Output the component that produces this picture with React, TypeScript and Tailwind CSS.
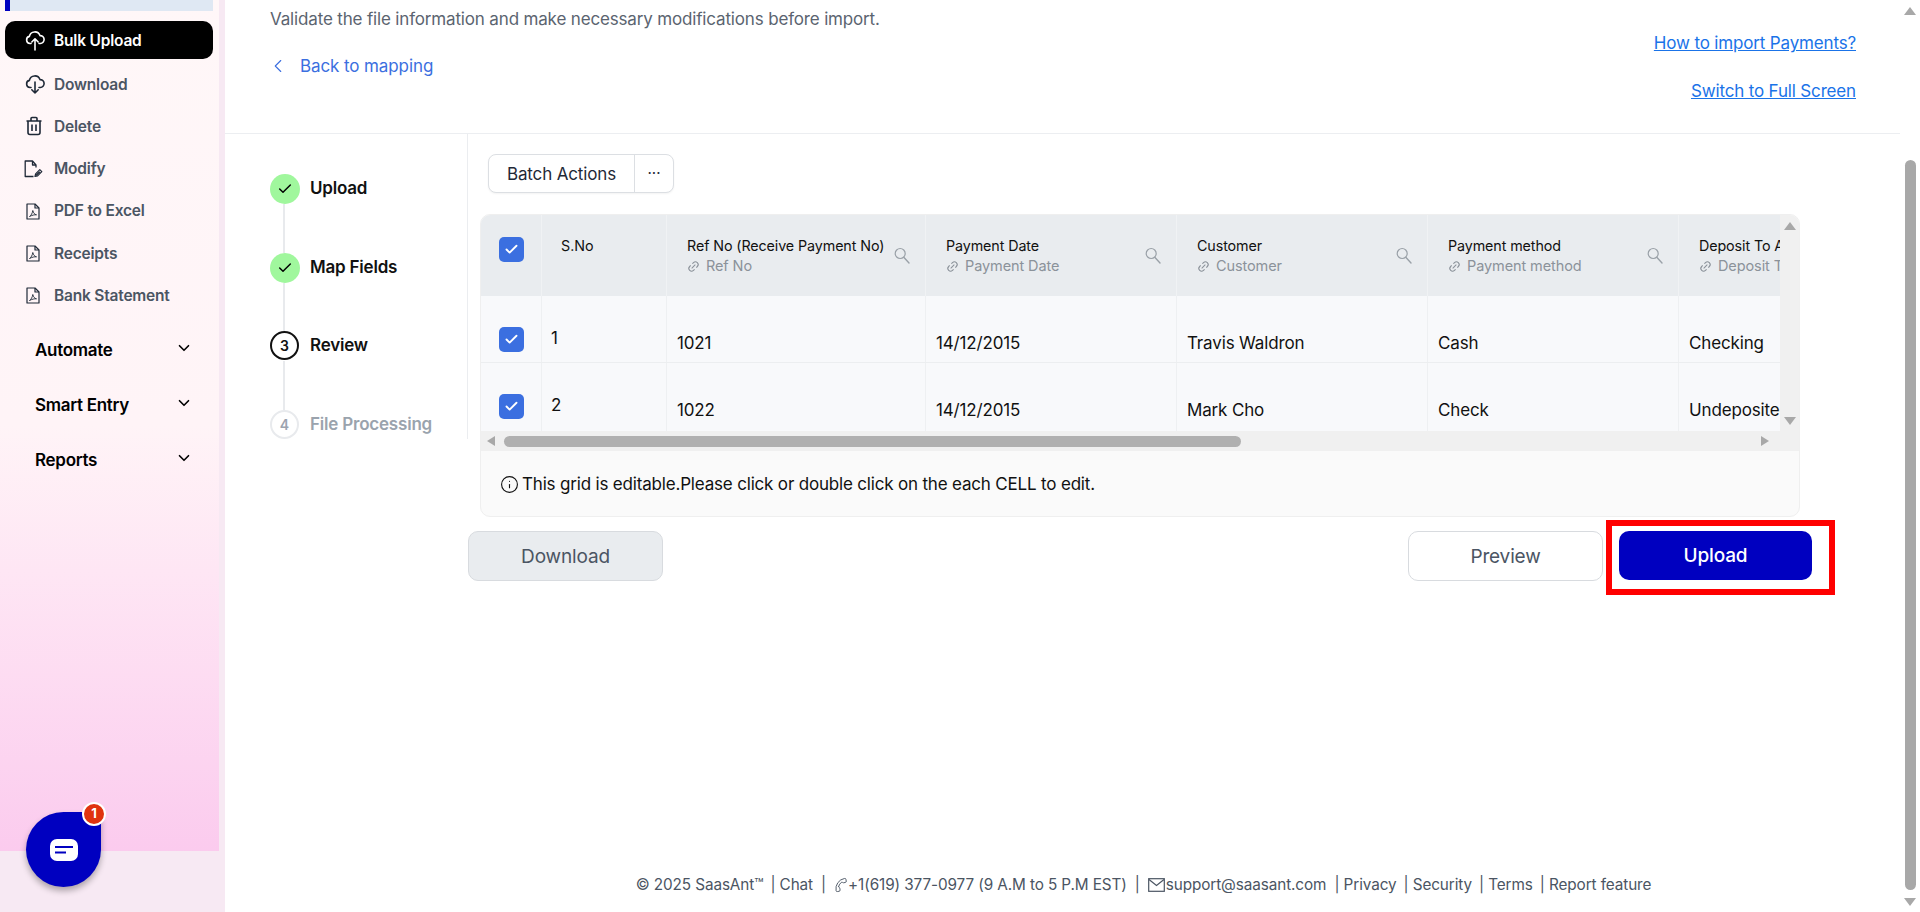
import { ChevronDown, ChevronLeft, Check, Link2, Info, Phone } from "lucide-react";

const font = "font-['Inter','Liberation_Sans',sans-serif]";

function CloudIcon({ up }: { up?: boolean }) {
  return (
    <svg width="20" height="22" viewBox="0 0 20 22" fill="none" stroke="currentColor" strokeWidth="1.600" strokeLinecap="round" strokeLinejoin="round">
      <path d="M6 14.500H5a3.600 3.600 0 0 1-.6-7.100A5.500 5.500 0 0 1 15 6.600a3.900 3.900 0 0 1 .3 7.900H14" />
      {up ? <path d="M10 21V10m-3.200 3L10 9.800l3.200 3.200" /> : <path d="M10 9v11m-3.200-3.200L10 20l3.200-3.200" />}
    </svg>
  );
}

function TrashIcon() {
  return (
    <svg width="18" height="20" viewBox="0 0 18 20" fill="none" stroke="currentColor" strokeWidth="1.600" strokeLinejoin="round">
      <path d="M1.500 5h15M6 5V2.500A1 1 0 0 1 7 1.500h4a1 1 0 0 1 1 1V5M3 5v11.500A2 2 0 0 0 5 18.500h8a2 2 0 0 0 2-2V5M7 8.500v6.500M11 8.500v6.500" />
    </svg>
  );
}

function ModifyIcon() {
  return (
    <svg width="19" height="18" viewBox="0 0 19 18" fill="none" stroke="currentColor" strokeWidth="1.300" strokeLinejoin="round">
      <path d="M9.500 16.500H1.200V1h7.300l3.500 4v2.500" />
      <path d="M8.500 1v4H12" />
      <path d="M11 16.500l.6-2.600 4.200-4.200 2 2-4.200 4.200z" strokeWidth="1.200" />
      <path d="M12 15.500l3.800-3.800" strokeWidth="1.600" />
    </svg>
  );
}

function PdfIcon() {
  return (
    <svg width="14" height="17" viewBox="0 0 14 17" fill="none" stroke="currentColor" strokeWidth="1.200" strokeLinejoin="round">
      <path d="M1 1h8l4 4v11H1z" />
      <path d="M9 1v4h4" />
      <path d="M3.500 13.500c1.500-.8 3-3.500 3.300-6 .5 2.500 2 4 3.700 4.300-2-.2-4.500.4-7 1.700z" strokeWidth="0.900" />
    </svg>
  );
}

function MailIcon() {
  return (
    <svg width="17" height="14" viewBox="0 0 17 14" fill="none" stroke="currentColor" strokeWidth="1.200">
      <rect x="0.700" y="0.700" width="15.600" height="12.600" />
      <path d="M1 1.500l7.500 6 7.500-6" />
    </svg>
  );
}

function SearchIcon() {
  return (
    <svg width="16" height="17" viewBox="0 0 16 17" fill="none" stroke="#9aa1a8" strokeWidth="1.200" strokeLinecap="round">
      <circle cx="6.200" cy="6.500" r="5" />
      <path d="M10 10.500l5 5.500" strokeWidth="1.400" />
    </svg>
  );
}

const menu = [
  { label: "Download", icon: <CloudIcon /> },
  { label: "Delete", icon: <TrashIcon /> },
  { label: "Modify", icon: <ModifyIcon /> },
  { label: "PDF to Excel", icon: <PdfIcon /> },
  { label: "Receipts", icon: <PdfIcon /> },
  { label: "Bank Statement", icon: <PdfIcon /> },
];

function Sidebar() {
  return (
    <aside className="relative w-[225px] shrink-0 h-full bg-[#f7e9f3] overflow-hidden">
      <div className="w-[219px] h-[851px] bg-gradient-to-b from-[#fff7f8] via-[#fff4f7] via-50% to-[#fbcbee] pr-[6px]">
        <div className="ml-[5px] w-[208px] h-[11px] bg-[#dfe8f3] border-l-[5px] border-[#0000c0]" />
        <div className="ml-[5px] mt-[10px] w-[208px] h-[38px] bg-black rounded-[10px] flex items-center text-white pl-[20px]">
          <CloudIcon up />
          <span className="ml-[9px] mt-[1px] text-[15.500px] font-semibold tracking-[-0.2px]">Bulk Upload</span>
        </div>
        <div className="mt-[4px]">
          {menu.map((m) => (
            <div key={m.label} className="h-[42.300px] flex items-center pl-[25px] text-[#1f2937]">
              <div className={"w-[29px] shrink-0 flex items-center " + (m.label === "Modify" ? "-ml-[1px] mr-[1px]" : m.label === "Download" || m.label === "Delete" ? "" : "pl-[1px]")}>
                {m.icon}
              </div>
              <span className="text-[15.500px] font-semibold text-[#4b5563] tracking-[-0.2px]">{m.label}</span>
            </div>
          ))}
        </div>
        <div className="mt-[6px] pl-[35px] pr-[20px]">
          {["Automate", "Smart Entry", "Reports"].map((t) => (
            <div key={t} className="h-[55px] flex items-center justify-between text-black">
              <span className="text-[17px] font-semibold tracking-[-0.3px]">{t}</span>
              <ChevronDown size={18} strokeWidth={2.200} className="-mt-[4px]" />
            </div>
          ))}
        </div>
      </div>
      {/* chat launcher */}
      <div className="absolute left-[26px] top-[812px] w-[75px] h-[75px] bg-[#0000c0] rounded-[50%_6px_50%_50%] shadow-[0_4px_6px_rgba(0,0,0,0.3)] flex items-center justify-center">
        <svg width="28" height="22" viewBox="0 0 28 22">
          <rect width="28" height="22" rx="7" fill="#fff" />
          <path d="M5 8h18M5 13.500h11" stroke="#0000c0" strokeWidth="2" />
        </svg>
      </div>
      <div className="absolute left-[82px] top-[802px] w-[24px] h-[24px] rounded-full bg-[#e0330f] border-2 border-white text-white text-[13px] font-bold flex items-center justify-center">
        1
      </div>
    </aside>
  );
}

const steps = [
  { label: "Upload", state: "done" },
  { label: "Map Fields", state: "done" },
  { label: "Review", state: "current", n: 3 },
  { label: "File Processing", state: "todo", n: 4 },
];

function Stepper() {
  return (
    <div className="w-[243px] shrink-0 h-[305px] border-r border-[#ebedf0] pl-[45px] pt-[40px]">
      {steps.map((s, i) => (
        <div key={s.label} className={"relative flex items-start " + (i < 3 ? "h-[78.700px]" : "")}>
          {i < 3 && <div className="absolute left-[13px] top-[30px] bottom-0 w-[2px] bg-[#e8eaed]" />}
          {s.state === "done" && (
            <div className="w-[30px] h-[30px] rounded-full bg-[#a0f79d] flex items-center justify-center text-black">
              <Check size={16} strokeWidth={2.200} />
            </div>
          )}
          {s.state === "current" && (
            <div className="w-[29px] h-[29px] rounded-full border-2 border-[#111] bg-white flex items-center justify-center text-[14px] font-semibold text-[#111]">
              {s.n}
            </div>
          )}
          {s.state === "todo" && (
            <div className="w-[29px] h-[29px] rounded-full border-2 border-[#e8eaed] bg-white flex items-center justify-center text-[14px] font-semibold text-[#9ca3af]">
              {s.n}
            </div>
          )}
          <span className={"leading-[28px] text-[17px] font-semibold tracking-[-0.2px] " + (s.state === "done" ? "ml-[10px] " : "ml-[11px] ") + (s.state === "todo" ? "text-[#9aa3ad]" : "text-[#111]")}>
            {s.label}
          </span>
        </div>
      ))}
    </div>
  );
}

function Checkbox() {
  return (
    <div className="w-[25px] h-[25px] rounded-[5px] bg-[#3b6fe0] flex items-center justify-center text-white">
      <Check size={15} strokeWidth={3} />
    </div>
  );
}

const cols = [
  { head: "Ref No (Receive Payment No)", sub: "Ref No", w: "w-[259px]", a: "1021", b: "1022" },
  { head: "Payment Date", sub: "Payment Date", w: "w-[251px]", a: "14/12/2015", b: "14/12/2015" },
  { head: "Customer", sub: "Customer", w: "w-[251px]", a: "Travis Waldron", b: "Mark Cho" },
  { head: "Payment method", sub: "Payment method", w: "w-[251px]", a: "Cash", b: "Check" },
  { head: "Deposit To Account", sub: "Deposit To Account", w: "w-[353px]", a: "Checking", b: "Undeposited Funds" },
];

function Grid() {
  return (
    <div className="ml-[12px] w-[1320px] h-[303px] bg-[#fafafa] border border-[#efefef] rounded-[10px] overflow-hidden">
      <div className="flex h-[236px]">
        <div className="w-[1300px] overflow-hidden flex flex-col">
          <div className="flex-1 overflow-hidden">
            {/* header */}
            <div className="flex w-[1400px] h-[81px] bg-[#e9ecef]">
              <div className="w-[61px] shrink-0 border-r border-[#f0f2f4] pl-[18px] pt-[22px]">
                <Checkbox />
              </div>
              <div className="w-[125px] shrink-0 border-r border-[#f0f2f4] pl-[19px] pt-[21px] text-[14.300px] leading-[20px] text-[#111]">S.No</div>
              {cols.map((c) => (
                <div key={c.head} className={c.w + " shrink-0 border-r border-[#f0f2f4] pl-[20px] pt-[21px] relative"}>
                  <div className="text-[14.300px] leading-[20px] text-[#111] whitespace-nowrap tracking-[-0.1px]">{c.head}</div>
                  <div className="flex items-center gap-[6px] text-[14.500px] leading-[20px] text-[#8b929a] whitespace-nowrap tracking-[-0.1px]">
                    <Link2 size={13} className="-rotate-45" />
                    {c.sub}
                  </div>
                  <div className="absolute right-[15px] top-[32px]">
                    <SearchIcon />
                  </div>
                </div>
              ))}
            </div>
            {/* rows */}
            {[0, 1].map((r) => (
              <div key={r} className={"flex w-[1400px] bg-[#f8f9fb] " + (r === 0 ? "h-[67px] border-b border-[#eceef0]" : "h-[68px]")}>
                <div className="w-[61px] shrink-0 border-r border-[#eef0f2] pl-[18px] pt-[31px]">
                  <Checkbox />
                </div>
                <div className="w-[125px] shrink-0 border-r border-[#eef0f2] pl-[9px] pt-[30px] text-[17px] leading-[24px] text-[#111]">{r + 1}</div>
                {cols.map((c) => (
                  <div key={c.head} className={c.w + " shrink-0 border-r border-[#eef0f2] pl-[10px] pt-[35px] text-[17px] leading-[24px] text-[#111] whitespace-nowrap tracking-[-0.15px]"}>
                    {r === 0 ? c.a : c.b}
                  </div>
                ))}
              </div>
            ))}
          </div>
          {/* horizontal scrollbar */}
          <div className="h-[20px] shrink-0 bg-[#f0f0f0] flex items-center relative">
            <div className="ml-[6px] w-0 h-0 border-y-[5px] border-y-transparent border-r-[8px] border-r-[#a8a8a8]" />
            <div className="ml-[9px] w-[737px] h-[11px] rounded-full bg-[#b0b0b0]" />
            <div className="absolute right-[11px] top-[5px] w-0 h-0 border-y-[5px] border-y-transparent border-l-[8px] border-l-[#a8a8a8]" />
          </div>
        </div>
        {/* vertical scrollbar */}
        <div className="w-[19px] shrink-0 bg-[#f0f0f0] relative">
          <div className="absolute left-[4px] top-[7px] w-0 h-0 border-x-[6px] border-x-transparent border-b-[8px] border-b-[#a8a8a8]" />
          <div className="absolute left-[4px] top-[202px] w-0 h-0 border-x-[6px] border-x-transparent border-t-[8px] border-t-[#a8a8a8]" />
        </div>
      </div>
      <div className="flex items-center pl-[19px] pt-[21px] text-[17px] text-[#111] tracking-[-0.18px]">
        <Info size={19} strokeWidth={1.400} className="mr-[3px]" />
        This grid is editable.Please click or double click on the each CELL to edit.
      </div>
    </div>
  );
}

function Footer() {
  return (
    <div className="flex items-center justify-center text-[15.300px] text-[#4b5563] tracking-[-0.1px] whitespace-nowrap">
      <span>© 2025 SaasAnt™</span>
      <span className="ml-[7px]">| Chat</span>
      <span className="mx-[8px]">|</span>
      <Phone size={14} strokeWidth={1.500} className="rotate-[80deg]" />
      <span>+1(619) 377-0977 (9 A.M to 5 P.M EST)</span>
      <span className="mx-[8px]">|</span>
      <MailIcon />
      <span className="ml-[1px]">support@saasant.com</span>
      <span className="ml-[8px]">| Privacy</span>
      <span className="ml-[7px]">| Security</span>
      <span className="ml-[7px]">| Terms</span>
      <span className="ml-[7px]">| Report feature</span>
    </div>
  );
}

export default function App() {
  return (
    <div className={"relative h-screen w-full flex overflow-hidden bg-white " + font}>
      <Sidebar />
      <main className="flex-1 min-w-0 flex flex-col">
        <header className="h-[134px] shrink-0 border-b border-[#eceef1] flex justify-between pl-[45px] pr-[64px]">
          <div>
            <p className="mt-[8px] text-[17px] leading-[22px] text-[#5b6470] tracking-[-0.16px]">
              Validate the file information and make necessary modifications before import.
            </p>
            <div className="mt-[25px] flex items-center text-[#3b6fe0] text-[17px] leading-[22px] tracking-[-0.1px]">
              <ChevronLeft size={22} strokeWidth={1.200} className="mr-[11px] -ml-[3px]" />
              Back to mapping
            </div>
          </div>
          <div className="flex flex-col items-end pt-[32px] gap-[26px] text-[17px] leading-[22px] text-[#1a73e8] underline tracking-[-0.16px]">
            <span>How to import Payments?</span>
            <span>Switch to Full Screen</span>
          </div>
        </header>
        <div className="flex flex-1 min-h-0 mr-[20px]">
          <Stepper />
          <div className="flex-1 min-w-0 relative">
            <div className="ml-[20px] mt-[20px] w-[186px] h-[39px] flex border border-[#dcdfe3] rounded-[8px] bg-white text-[#1f2937] shadow-[0_1px_2px_rgba(0,0,0,0.05)]">
              <div className="w-[146px] pt-[2px] border-r border-[#dcdfe3] flex items-center justify-center text-[17px] tracking-[-0.15px]">Batch Actions</div>
              <div className="flex-1 flex items-center justify-center text-[15px]">···</div>
            </div>
            <div className="mt-[21px]">
              <Grid />
            </div>
            <div className="mt-[14px] flex">
              <button className="w-[195px] h-[50px] pt-[2px] bg-[#e9ecef] border border-[#d8dbdf] rounded-[10px] text-[19px] text-[#4b5563] tracking-[-0.15px]">Download</button>
              <button className="ml-[745px] w-[195px] h-[50px] pt-[2px] bg-white border border-[#d8dbdf] rounded-[10px] text-[19px] text-[#4b5563] tracking-[-0.15px]">Preview</button>
              <button className="ml-[16px] w-[193px] h-[49px] pt-[2px] bg-[#0000c0] rounded-[10px] text-[19px] font-medium text-white tracking-[-0.15px]">Upload</button>
            </div>
            {/* annotation box around the upload button */}
            <div className="absolute left-[1138px] top-[386px] w-[229px] h-[75px] border-[6px] border-[#ff0000]" />
          </div>
        </div>
        <div className="h-[38px] shrink-0 pl-[162px] mr-[20px]">
          <Footer />
        </div>
      </main>
      {/* page scrollbar */}
      <div className="absolute right-0 top-0 w-[20px] h-full bg-white">
        <div className="absolute left-[4px] top-[7px] w-0 h-0 border-x-[6px] border-x-transparent border-b-[8px] border-b-[#a8a8a8]" />
        <div className="absolute left-[5px] top-[160px] w-[11px] h-[730px] rounded-full bg-[#a8a8a8]" />
        <div className="absolute left-[4px] top-[898px] w-0 h-0 border-x-[6px] border-x-transparent border-t-[8px] border-t-[#a8a8a8]" />
      </div>
    </div>
  );
}
